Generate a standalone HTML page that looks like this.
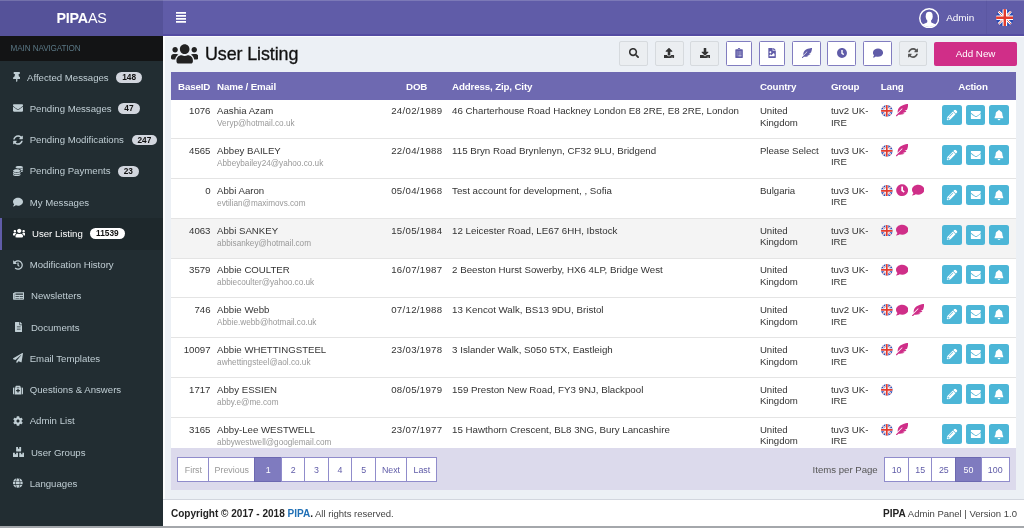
<!DOCTYPE html>
<html>
<head>
<meta charset="utf-8">
<title>PIPA Admin</title>
<style>
*{box-sizing:border-box;margin:0;padding:0}
html,body{width:1024px;height:528px;overflow:hidden;background:#ecf0f5}
body{font-family:"Liberation Sans",sans-serif;font-size:9.65px;color:#333;position:relative;-webkit-font-smoothing:antialiased;will-change:transform}
svg{display:block}
.abs{position:absolute}
/* header */
#logo{left:0;top:0;width:163px;height:35.7px;background:#555299;color:#fff;text-align:center;line-height:37.5px;font-size:14.3px;letter-spacing:-0.2px}
#logo b{font-weight:bold}
#nav{left:163px;top:0;width:861px;height:35.7px;background:#605ca8}
#burger{left:175.7px;top:12px;width:10.8px;height:10.8px;color:#fff}
#userimg{left:918.85px;top:7.85px}
#admin{left:946.2px;top:0.3px;line-height:35.7px;color:#fff;font-size:9.95px}
#flagsep{left:985.5px;top:0;width:1px;height:35.7px;background:#5b57a2}
#navb{left:163px;top:34.3px;width:861px;height:1.4px;background:#544ca2}
#wl1{left:163px;top:35.7px;width:861px;height:1.5px;background:#fbfcfd}
#wl2{left:163px;top:35.7px;width:1.6px;height:463.3px;background:#fbfcfd}
#topline{left:0;top:0;width:1024px;height:1px;background:rgba(255,255,255,0.18)}
/* sidebar */
#side{left:0;top:35.7px;width:163px;height:493px;background:#222d32}
#band{left:0;top:0;width:163px;height:25.8px;background:#131415;color:#5a7784;font-size:8.15px;line-height:25.8px;padding-left:10.6px;letter-spacing:-0.1px}
.mi{position:absolute;left:0;width:163px;height:31.25px;color:#c0ced4;line-height:31.25px;white-space:nowrap}
.mi .ic{position:absolute;top:0;left:0;color:#c0ced4;fill:currentColor}
.mi .tx{position:absolute;top:0}
.mi .bd{position:absolute;top:10.4px;height:10.9px;line-height:11.5px;background:#d2d6de;color:#111;border-radius:6px;font-weight:bold;font-size:8.3px;text-align:center}
.mi.act{height:31.8px;background:#1e282c;color:#fff;border-left:2.2px solid #605ca8}
.mi.act .ic{color:#fff}
.mi.act .bd{background:#fff}
/* content */
#title{-webkit-text-stroke:0.3px #111;left:205px;top:42.3px;font-size:17.9px;line-height:24px;color:#111;letter-spacing:-0.1px}
#titleic{left:171.1px;top:43px;color:#222}
.tb{position:absolute;top:41.2px;height:24.6px;border:1px solid #d6dade;background:#ebeef1;border-radius:2px;color:#333}
.tb.p{border-radius:1.5px;border-color:#817dc0;background:#fff;color:#605ca8}
.tb svg{position:absolute;left:50%;top:50%;transform:translate(-50%,-50%);fill:currentColor}
#addnew{left:934.3px;top:41.8px;width:82.5px;height:24px;background:#d02e88;color:#fff;border-radius:2px;text-align:center;line-height:24px;font-size:9.8px}
/* table */
#box{left:171.3px;top:72.2px;width:845.2px;height:418.3px;background:#fff;overflow:hidden}
#thead{z-index:2;left:0;top:0;width:845.2px;height:27.6px;background:#6e69b1;color:#fff;font-weight:bold;font-size:9.75px;line-height:27.3px}
#thead span{position:absolute;top:0.6px;white-space:nowrap;letter-spacing:-0.15px}
.row{position:absolute;left:0;width:845.2px;height:39.83px;border-top:1px solid #e4e4e4;background:#fff;line-height:12px;color:#333}
.row.alt{background:#f4f4f4}
.row span,.row div{position:absolute;white-space:nowrap}
.row .id{right:806px;top:5.95px;text-align:right}
.row .nm{left:45.8px;top:5.95px}
.row .em{left:45.8px;top:18.8px;font-size:8.2px;color:#999}
.row .dob{left:218.5px;top:5.95px;width:54px;text-align:center;letter-spacing:0.3px}
.row .ad{left:280.8px;top:5.95px;font-size:9.73px}
.row .co{left:588.6px;top:5.95px;white-space:normal;width:60px;line-height:11.4px}
.row .gr{left:659.6px;top:5.95px;white-space:normal;width:48px;line-height:11.4px}
.row .lg{left:709.5px;top:5.85px;height:11px;width:60px}
.row .ab{top:6.2px;width:19.5px;height:19.7px;background:#4cb6d7;border-radius:2.5px;color:#fff}
.row .ab svg{position:absolute;left:50%;top:50%;transform:translate(-50%,-50%);fill:#fff}
.lg svg{position:absolute;top:0}
svg.fl{position:absolute}
/* box footer */
#bfoot{left:0;top:375.8px;width:845.2px;height:42.5px;background:#dcdaec}
.pg{position:absolute;top:9.4px;height:25px;border:1px solid #908ccb;background:#fff;color:#605ca8;text-align:center;line-height:24.8px;font-size:8.85px;margin-left:-1px}
.pg.dis{color:#999}
.pg.on{background:#7f7bbf;color:#fff;border-color:#6c68b0}
#ipp{top:9.7px;left:641.3px;line-height:24.6px;color:#555;font-size:9.6px}
/* footer */
#foot{left:163px;top:498.8px;width:861px;height:28px;background:#fff;border-top:1px solid #d2d6de;color:#444;font-size:9.5px;line-height:28.6px}
#foot b{color:#222;font-size:10.02px}
#foot .l{position:absolute;left:8px;top:0}
#foot .r{position:absolute;right:7px;top:0}
#botline{left:0;top:526px;width:1024px;height:2px;background:#a4a7ab}
</style>
</head>
<body>

<div id="logo" class="abs"><b>PIPA</b>AS</div>
<div id="nav" class="abs"></div>
<svg id="burger" class="abs" viewBox="0 0 10.8 10.8"><path fill="#fff" d="M0 0h10.8v1.8H0zM0 3h10.8v1.8H0zM0 6h10.8v1.8H0zM0 9h10.8v1.800H0z"/></svg>
<svg id="userimg" class="abs" viewBox="0 0 20.4 20.4" width="20.4" height="20.4"><defs><clipPath id="uc"><circle cx="10.2" cy="10.2" r="8.9"/></clipPath></defs><g clip-path="url(#uc)" fill="#fff"><ellipse cx="10.2" cy="8.3" rx="3.5" ry="4.5"/><path d="M8.3 11.5h3.800v2.100c0 1 .8 1.500 2.400 2 2.300.8 3.400 1.700 3.900 3.500v2H2v-2c.5-1.800 1.600-2.700 3.900-3.500 1.600-.5 2.400-1 2.400-2z"/></g><circle cx="10.2" cy="10.2" r="9.45" fill="none" stroke="#fff" stroke-width="1.45"/></svg>
<div id="admin" class="abs">Admin</div>
<div id="flagsep" class="abs"></div><div id="topline" class="abs"></div><div id="navb" class="abs"></div><div id="wl1" class="abs"></div><div id="wl2" class="abs"></div>
<svg class="fl" viewBox="0 0 20 20" width="17.6" height="17.6" style="left:995.5px;top:8.8px"><defs><clipPath id="fc10"><circle cx="10" cy="10" r="10"/></clipPath></defs><g clip-path="url(#fc10)"><rect width="20" height="20" fill="#2a4cb4"/><path d="M0 0L20 20M20 0L0 20" stroke="#fff" stroke-width="2.8"/><path d="M0 0L20 20M20 0L0 20" stroke="#e23a2e" stroke-width="0.9"/><path d="M10 0V20M0 10H20" stroke="#fff" stroke-width="5.2"/><path d="M10 0V20M0 10H20" stroke="#e23a2e" stroke-width="2.8"/></g></svg>

<div id="side" class="abs">
<div id="band" class="abs">MAIN NAVIGATION</div>
<div class="mi" style="top:26.00px"><svg class="ic" viewBox="0 0 384 512" width="7.50" height="10.00" style="left:12.90px;top:10.5px"><path d="M298.028 214.267L285.793 96H328c13.255 0 24-10.745 24-24V24c0-13.255-10.745-24-24-24H56C42.745 0 32 10.745 32 24v48c0 13.255 10.745 24 24 24h42.207L85.972 214.267C37.465 236.820 0 277.261 0 328c0 13.255 10.745 24 24 24h136v104.007c0 1.242.289 2.467.845 3.578l24 48c2.941 5.882 11.364 5.893 14.311 0l24-48a8.008 8.008 0 0 0 .845-3.578V352h136c13.255 0 24-10.745 24-24 0-51.183-37.983-91.420-85.973-113.733z"/></svg><span class="tx" style="left:27.00px">Affected Messages</span><span class="bd" style="left:116.00px;width:26.20px">148</span></div>
<div class="mi" style="top:57.25px"><svg class="ic" viewBox="0 0 512 512" width="10.00" height="10.00" style="left:12.90px;top:10.5px"><path d="M502.300 190.800c3.900-3.100 9.700-.2 9.700 4.700V400c0 26.500-21.500 48-48 48H48c-26.500 0-48-21.500-48-48V195.600c0-5 5.700-7.800 9.700-4.700 22.400 17.400 52.100 39.500 154.100 113.600 21.100 15.400 56.700 47.800 92.200 47.600 35.700.3 72-32.800 92.300-47.600 102-74.100 131.600-96.300 154-113.700zM256 320c23.200.4 56.600-29.200 73.400-41.400 132.700-96.300 142.800-104.700 173.400-128.700 5.800-4.500 9.200-11.500 9.200-18.900v-19c0-26.500-21.500-48-48-48H48C21.500 64 0 85.500 0 112v19c0 7.400 3.400 14.300 9.200 18.900 30.600 23.900 40.700 32.400 173.400 128.700 16.800 12.200 50.200 41.800 73.400 41.400z"/></svg><span class="tx" style="left:29.70px">Pending Messages</span><span class="bd" style="left:118.20px;width:21.60px">47</span></div>
<div class="mi" style="top:88.50px"><svg class="ic" viewBox="0 0 512 512" width="10.00" height="10.00" style="left:12.90px;top:10.5px"><path d="M370.720 133.280C339.458 104.008 298.888 87.962 255.848 88c-77.458.068-144.328 53.178-162.791 126.850-1.344 5.363-6.122 9.150-11.651 9.150H24.103c-7.498 0-13.194-6.807-11.807-14.176C33.933 94.924 134.813 8 256 8c66.448 0 126.791 26.136 171.315 68.685L463.030 40.970C478.149 25.851 504 36.559 504 57.941V192c0 13.255-10.745 24-24 24H345.941c-21.382 0-32.090-25.851-16.971-40.971l41.750-41.749zM32 296h134.059c21.382 0 32.090 25.851 16.971 40.971l-41.750 41.750c31.262 29.273 71.835 45.319 114.876 45.280 77.418-.07 144.315-53.144 162.787-126.849 1.344-5.363 6.122-9.150 11.651-9.150h57.304c7.498 0 13.194 6.807 11.807 14.176C478.067 417.076 377.187 504 256 504c-66.448 0-126.791-26.136-171.315-68.685L48.970 471.030C33.851 486.149 8 475.441 8 454.059V320c0-13.255 10.745-24 24-24z"/></svg><span class="tx" style="left:29.70px">Pending Modifications</span><span class="bd" style="left:131.60px;width:25.60px">247</span></div>
<div class="mi" style="top:119.75px"><svg class="ic" viewBox="0 0 512 512" width="10.00" height="10.00" style="left:12.90px;top:10.5px"><path d="M0 405v43c0 35 86 64 192 64s192-29 192-64v-43c-41 29-117 43-192 43S41 434 0 405zM320 128c106 0 192-29 192-64S426 0 320 0 128 29 128 64s86 64 192 64zM0 300v52c0 35 86 64 192 64s192-29 192-64v-52c-41 34-117 52-192 52S41 334 0 300zm416 11c57-11 96-32 96-55v-43c-23 16-57 27-96 34v64zM192 160C86 160 0 196 0 240s86 80 192 80 192-36 192-80-86-80-192-80zm219 56c60-11 101-32 101-56v-43c-35 25-96 39-160 42 29 14 51 33 59 57z"/></svg><span class="tx" style="left:29.70px">Pending Payments</span><span class="bd" style="left:117.80px;width:21.00px">23</span></div>
<div class="mi" style="top:151.00px"><svg class="ic" viewBox="0 0 512 512" width="10.00" height="10.00" style="left:12.90px;top:10.5px"><path d="M256 32C114.600 32 0 125.100 0 240c0 49.600 21.400 95 57 130.700C44.500 421.100 2.700 466 2.200 466.500c-2.200 2.300-2.800 5.700-1.500 8.700S4.800 480 8 480c66.300 0 116-31.800 140.600-51.400 32.700 12.300 69 19.400 107.400 19.400 141.400 0 256-93.100 256-208S397.400 32 256 32z"/></svg><span class="tx" style="left:29.70px">My Messages</span></div>
<div class="mi act" style="top:182.25px"><svg class="ic" viewBox="0 0 640 512" width="12.50" height="10.00" style="left:10.70px;top:10.5px"><path d="M96 224c35.300 0 64-28.700 64-64s-28.700-64-64-64-64 28.700-64 64 28.700 64 64 64zm448 0c35.300 0 64-28.700 64-64s-28.700-64-64-64-64 28.700-64 64 28.700 64 64 64zm32 32h-64c-17.600 0-33.500 7.100-45.100 18.600 40.300 22.100 68.900 62 75.100 109.400h66c17.700 0 32-14.300 32-32v-32c0-35.300-28.700-64-64-64zm-256 0c61.900 0 112-50.100 112-112S381.900 32 320 32 208 82.100 208 144s50.100 112 112 112zm76.800 32h-8.300c-20.800 10-43.900 16-68.500 16s-47.600-6-68.500-16h-8.300C179.600 288 128 339.600 128 403.200V432c0 26.500 21.500 48 48 48h288c26.500 0 48-21.500 48-48v-28.800c0-63.600-51.600-115.200-115.200-115.200zm-223.700-13.400C161.500 263.100 145.600 256 128 256H64c-35.300 0-64 28.700-64 64v32c0 17.700 14.300 32 32 32h65.900c6.300-47.400 34.900-87.300 75.200-109.400z"/></svg><span class="tx" style="left:30.00px">User Listing</span><span class="bd" style="left:87.60px;width:35.60px">11539</span></div>
<div class="mi" style="top:213.50px"><svg class="ic" viewBox="0 0 512 512" width="10.00" height="10.00" style="left:12.90px;top:10.5px"><path d="M504 255.531c.253 136.640-111.180 248.372-247.820 248.468-59.015.042-113.223-20.530-155.822-54.911-11.077-8.940-11.905-25.541-1.839-35.607l11.267-11.267c8.609-8.609 22.353-9.551 31.891-1.984C173.062 425.135 212.781 440 256 440c101.705 0 184-82.311 184-184 0-101.705-82.311-184-184-184-48.814 0-93.149 18.969-126.068 49.932l50.754 50.754c10.080 10.080 2.941 27.314-11.313 27.314H24c-8.837 0-16-7.163-16-16V38.627c0-14.254 17.234-21.393 27.314-11.314l49.372 49.372C129.209 34.136 189.552 8 256 8c136.810 0 247.747 110.780 248 247.531zm-180.912 78.784l9.823-12.630c8.138-10.463 6.253-25.542-4.210-33.679L288 256.349V152c0-13.255-10.745-24-24-24h-16c-13.255 0-24 10.745-24 24v135.651l65.409 50.874c10.463 8.137 25.541 6.253 33.679-4.210z"/></svg><span class="tx" style="left:29.70px">Modification History</span></div>
<div class="mi" style="top:244.75px"><svg class="ic" viewBox="0 0 576 512" width="11.25" height="10.00" style="left:12.70px;top:10.5px"><path d="M552 64H88c-13 0-24 11-24 24v8H24c-13 0-24 11-24 24v272c0 31 25 56 56 56h464c31 0 56-25 56-56V88c0-13-11-24-24-24zM56 400c-4 0-8-4-8-8V144h16v248c0 4-4 8-8 8zm236-16H140c-7 0-12-5-12-12v-8c0-7 5-12 12-12h152c7 0 12 5 12 12v8c0 7-5 12-12 12zm208 0H348c-7 0-12-5-12-12v-8c0-7 5-12 12-12h152c7 0 12 5 12 12v8c0 7-5 12-12 12zm-208-96H140c-7 0-12-5-12-12v-8c0-7 5-12 12-12h152c7 0 12 5 12 12v8c0 7-5 12-12 12zm208 0H348c-7 0-12-5-12-12v-8c0-7 5-12 12-12h152c7 0 12 5 12 12v8c0 7-5 12-12 12zm0-96H140c-7 0-12-5-12-12v-40c0-7 5-12 12-12h360c7 0 12 5 12 12v40c0 7-5 12-12 12z"/></svg><span class="tx" style="left:31.00px">Newsletters</span></div>
<div class="mi" style="top:276.00px"><svg class="ic" viewBox="0 0 384 512" width="7.50" height="10.00" style="left:14.80px;top:10.5px"><path d="M224 136V0H24C10.700 0 0 10.700 0 24v464c0 13.300 10.700 24 24 24h336c13.300 0 24-10.700 24-24V160H248c-13.200 0-24-10.800-24-24zm64 236c0 6.600-5.400 12-12 12H108c-6.600 0-12-5.400-12-12v-8c0-6.600 5.400-12 12-12h168c6.600 0 12 5.400 12 12v8zm0-64c0 6.600-5.400 12-12 12H108c-6.600 0-12-5.400-12-12v-8c0-6.600 5.400-12 12-12h168c6.600 0 12 5.400 12 12v8zm0-72v8c0 6.600-5.400 12-12 12H108c-6.600 0-12-5.400-12-12v-8c0-6.600 5.400-12 12-12h168c6.600 0 12 5.400 12 12zm96-114.100v6.100H256V0h6.100c6.400 0 12.500 2.500 17 7l97.900 98c4.500 4.500 7 10.600 7 16.900z"/></svg><span class="tx" style="left:30.90px">Documents</span></div>
<div class="mi" style="top:307.25px"><svg class="ic" viewBox="0 0 512 512" width="10.00" height="10.00" style="left:12.90px;top:10.5px"><path d="M476 3.200L12.500 270.600c-18.100 10.400-15.800 35.600 2.200 43.200L121 358.400l287.300-253.200c5.500-4.900 13.300 2.600 8.600 8.300L176 407v80.500c0 23.600 28.500 32.900 42.500 15.800L282 426l124.600 52.200c14.200 6 30.400-2.900 33-18.200l72-432C515 7.800 493.300-6.800 476 3.200z"/></svg><span class="tx" style="left:29.70px">Email Templates</span></div>
<div class="mi" style="top:338.50px"><svg class="ic" viewBox="0 0 512 512" width="10.00" height="10.00" style="left:12.70px;top:10.5px"><path d="M96 480h320V128h-32V80c0-26-22-48-48-48H176c-26 0-48 22-48 48v48H96v352zm96-384h128v32H192V96zm320 80v256c0 26-22 48-48 48h-16V128h16c26 0 48 22 48 48zM64 480H48c-26 0-48-22-48-48V176c0-26 22-48 48-48h16v352zm288-208v32c0 9-7 16-16 16h-48v48c0 9-7 16-16 16h-32c-9 0-16-7-16-16v-48h-48c-9 0-16-7-16-16v-32c0-9 7-16 16-16h48v-48c0-9 7-16 16-16h32c9 0 16 7 16 16v48h48c9 0 16 7 16 16z"/></svg><span class="tx" style="left:29.70px">Questions &amp; Answers</span></div>
<div class="mi" style="top:369.75px"><svg class="ic" viewBox="0 0 512 512" width="10.00" height="10.00" style="left:12.90px;top:10.5px"><path d="M487.400 315.700l-42.600-24.600c4.300-23.200 4.300-47 0-70.200l42.600-24.600c4.900-2.800 7.100-8.600 5.500-14-11.100-35.600-30-67.800-54.700-94.600-3.800-4.100-10-5.100-14.800-2.300L380.800 110c-17.900-15.400-38.500-27.300-60.800-35.100V25.800c0-5.600-3.900-10.500-9.400-11.700-36.700-8.200-74.300-7.800-109.200 0-5.500 1.200-9.400 6.100-9.400 11.700V75c-22.200 7.900-42.800 19.800-60.800 35.100L88.700 85.500c-4.900-2.800-11-1.900-14.800 2.300-24.700 26.700-43.600 58.900-54.700 94.600-1.700 5.400.6 11.200 5.500 14L67.300 221c-4.300 23.200-4.300 47 0 70.200l-42.600 24.600c-4.900 2.800-7.100 8.600-5.500 14 11.100 35.600 30 67.800 54.700 94.600 3.800 4.100 10 5.100 14.800 2.300l42.600-24.600c17.900 15.400 38.500 27.300 60.800 35.100v49.200c0 5.600 3.900 10.500 9.400 11.700 36.700 8.200 74.300 7.800 109.200 0 5.500-1.200 9.400-6.100 9.400-11.700v-49.200c22.200-7.900 42.800-19.800 60.800-35.100l42.600 24.600c4.900 2.800 11 1.900 14.800-2.300 24.700-26.700 43.600-58.900 54.700-94.600 1.500-5.500-.7-11.300-5.600-14.100zM256 336c-44.100 0-80-35.900-80-80s35.900-80 80-80 80 35.900 80 80-35.900 80-80 80z"/></svg><span class="tx" style="left:29.70px">Admin List</span></div>
<div class="mi" style="top:401.00px"><svg class="ic" viewBox="0 0 576 512" width="11.25" height="10.00" style="left:12.60px;top:10.5px"><path d="M560 288h-80v96l-32-21-32 21v-96h-80c-9 0-16 7-16 16v192c0 9 7 16 16 16h224c9 0 16-7 16-16V304c0-9-7-16-16-16zm-384-64h224c9 0 16-7 16-16V16c0-9-7-16-16-16h-80v96l-32-21-32 21V0h-80c-9 0-16 7-16 16v192c0 9 7 16 16 16zm64 64h-80v96l-32-21-32 21v-96H16c-9 0-16 7-16 16v192c0 9 7 16 16 16h224c9 0 16-7 16-16V304c0-9-7-16-16-16z"/></svg><span class="tx" style="left:30.90px">User Groups</span></div>
<div class="mi" style="top:432.25px"><svg class="ic" viewBox="0 0 496 512" width="9.69" height="10.00" style="left:13.00px;top:10.5px"><path d="M336.500 160C322 70.700 287.800 8 248 8s-74 62.700-88.500 152h177zM152 256c0 22.200 1.200 43.500 3.300 64h185.300c2.100-20.500 3.300-41.800 3.300-64s-1.200-43.500-3.300-64H155.300c-2.100 20.500-3.300 41.800-3.300 64zm324.700-96c-28.600-67.900-86.500-120.400-158-141.600 24.400 33.800 41.200 84.700 50 141.600h108zM177.200 18.400C105.800 39.600 47.800 92.100 19.300 160h108c8.700-56.900 25.500-107.800 49.900-141.600zM487.400 192H372.700c2.100 21 3.300 42.500 3.300 64s-1.200 43-3.300 64h114.600c5.500-20.500 8.600-41.800 8.600-64s-3.100-43.500-8.500-64zM120 256c0-21.500 1.200-43 3.300-64H8.600C3.200 212.500 0 233.800 0 256s3.200 43.500 8.600 64h114.600c-2-21-3.200-42.500-3.200-64zm39.500 96c14.500 89.300 48.700 152 88.500 152s74-62.700 88.500-152h-177zm159.300 141.600c71.400-21.200 129.400-73.700 158-141.600h-108c-8.800 56.900-25.600 107.800-50 141.600zM19.300 352c28.600 67.900 86.500 120.400 158 141.600-24.400-33.800-41.200-84.700-50-141.600h-108z"/></svg><span class="tx" style="left:29.70px">Languages</span></div>
</div>

<div id="titleic" class="abs"><svg viewBox="0 0 640 512" width="27.38" height="21.90" style="fill:#222"><path d="M96 224c35.300 0 64-28.700 64-64s-28.700-64-64-64-64 28.700-64 64 28.700 64 64 64zm448 0c35.300 0 64-28.700 64-64s-28.700-64-64-64-64 28.700-64 64 28.700 64 64 64zm32 32h-64c-17.600 0-33.500 7.100-45.100 18.600 40.300 22.100 68.900 62 75.100 109.400h66c17.700 0 32-14.300 32-32v-32c0-35.300-28.700-64-64-64zm-256 0c61.900 0 112-50.100 112-112S381.900 32 320 32 208 82.100 208 144s50.100 112 112 112zm76.800 32h-8.300c-20.800 10-43.900 16-68.500 16s-47.600-6-68.500-16h-8.300C179.600 288 128 339.600 128 403.200V432c0 26.500 21.500 48 48 48h288c26.500 0 48-21.500 48-48v-28.800c0-63.600-51.600-115.200-115.200-115.200zm-223.700-13.400C161.500 263.100 145.600 256 128 256H64c-35.300 0-64 28.700-64 64v32c0 17.700 14.300 32 32 32h65.900c6.300-47.400 34.900-87.300 75.200-109.400z"/></svg></div>
<div id="title" class="abs">User Listing</div>
<div class="tb" style="left:619.20px;width:28.70px"><svg viewBox="0 0 512 512" width="10.20" height="10.20" style=""><path d="M505 442.700L405.300 343c-4.500-4.500-10.600-7-17-7H372c27.600-35.300 44-79.700 44-128C416 93.100 322.900 0 208 0S0 93.100 0 208s93.100 208 208 208c48.300 0 92.700-16.400 128-44v16.300c0 6.400 2.500 12.500 7 17l99.700 99.700c9.400 9.400 24.600 9.400 33.900 0l28.300-28.300c9.400-9.400 9.400-24.600.1-34zM208 336c-70.700 0-128-57.200-128-128 0-70.700 57.200-128 128-128 70.700 0 128 57.200 128 128 0 70.700-57.200 128-128 128z"/></svg></div>
<div class="tb" style="left:655.00px;width:28.90px"><svg viewBox="0 0 512 512" width="10.20" height="10.20" style=""><path d="M296 384h-80c-13.300 0-24-10.700-24-24V192h-87.700c-17.800 0-26.700-21.500-14.100-34.100L242.300 5.700c7.500-7.500 19.800-7.500 27.300 0l152.200 152.200c12.600 12.600 3.700 34.100-14.100 34.100H320v168c0 13.300-10.700 24-24 24zm216-8v112c0 13.300-10.700 24-24 24H24c-13.300 0-24-10.700-24-24V376c0-13.300 10.700-24 24-24h136v8c0 30.900 25.100 56 56 56h80c30.900 0 56-25.100 56-56v-8h136c13.300 0 24 10.700 24 24zm-124 88c0-11-9-20-20-20s-20 9-20 20 9 20 20 20 20-9 20-20zm64 0c0-11-9-20-20-20s-20 9-20 20 9 20 20 20 20-9 20-20z"/></svg></div>
<div class="tb" style="left:690.20px;width:28.80px"><svg viewBox="0 0 512 512" width="10.20" height="10.20" style=""><path d="M216 0h80c13.300 0 24 10.700 24 24v168h87.700c17.800 0 26.700 21.500 14.100 34.100L269.700 378.300c-7.500 7.500-19.800 7.500-27.300 0L90.100 226.100c-12.600-12.600-3.700-34.100 14.100-34.100H192V24c0-13.300 10.700-24 24-24zm296 376v112c0 13.300-10.700 24-24 24H24c-13.300 0-24-10.700-24-24V376c0-13.300 10.700-24 24-24h146.700l49 49c20.100 20.100 52.500 20.100 72.600 0l49-49H488c13.300 0 24 10.700 24 24zm-124 88c0-11-9-20-20-20s-20 9-20 20 9 20 20 20 20-9 20-20zm64 0c0-11-9-20-20-20s-20 9-20 20 9 20 20 20 20-9 20-20z"/></svg></div>
<div class="tb p" style="left:725.75px;width:26.50px"><svg viewBox="0 0 384 512" width="7.65" height="10.20" style=""><path d="M336 64h-80c0-35.300-28.700-64-64-64s-64 28.700-64 64H48C21.500 64 0 85.500 0 112v352c0 26.500 21.500 48 48 48h288c26.500 0 48-21.500 48-48V112c0-26.500-21.500-48-48-48zM96 424c-13.300 0-24-10.700-24-24s10.700-24 24-24 24 10.700 24 24-10.700 24-24 24zm0-96c-13.300 0-24-10.700-24-24s10.700-24 24-24 24 10.700 24 24-10.700 24-24 24zm0-96c-13.300 0-24-10.700-24-24s10.700-24 24-24 24 10.700 24 24-10.700 24-24 24zm96-192c13.300 0 24 10.700 24 24s-10.700 24-24 24-24-10.700-24-24 10.700-24 24-24zm128 368c0 4.400-3.600 8-8 8H168c-4.400 0-8-3.600-8-8v-16c0-4.400 3.600-8 8-8h144c4.400 0 8 3.600 8 8v16zm0-96c0 4.400-3.600 8-8 8H168c-4.400 0-8-3.600-8-8v-16c0-4.400 3.600-8 8-8h144c4.400 0 8 3.600 8 8v16zm0-96c0 4.400-3.600 8-8 8H168c-4.400 0-8-3.600-8-8v-16c0-4.400 3.600-8 8-8h144c4.400 0 8 3.600 8 8v16z"/></svg></div>
<div class="tb p" style="left:759.00px;width:26.00px"><svg viewBox="0 0 384 512" width="7.65" height="10.20" style=""><path d="M384 121.900v6.100H256V0h6.100c6.400 0 12.500 2.500 17 7l97.900 98c4.500 4.500 7 10.600 7 16.900zM248 160c-13.200 0-24-10.800-24-24V0H24C10.700 0 0 10.700 0 24v464c0 13.300 10.700 24 24 24h336c13.300 0 24-10.700 24-24V160H248zM112 168c26.500 0 48 21.500 48 48s-21.500 48-48 48-48-21.500-48-48 21.500-48 48-48zM320 416H64l.5-48.500 39.500-39.500c4.700-4.700 11.800-4.200 16.500.5L160 368 263.500 264.500c4.700-4.700 12.300-4.700 17 0L320 304v112z"/></svg></div>
<div class="tb p" style="left:792.25px;width:28.50px"><svg viewBox="0 0 512 512" width="10.20" height="10.20" style=""><path d="M512 0C460.220 3.560 96.440 38.200 71.010 287.610c-3.090 26.660-4.840 53.440-5.990 80.240l178.870-178.690c6.250-6.250 16.400-6.250 22.650 0s6.250 16.380 0 22.630L7.040 471.030c-9.380 9.370-9.380 24.570 0 33.940 9.380 9.370 24.590 9.370 33.980 0l57.130-57.070c42.090-.14 84.150-2.530 125.960-7.360 53.480-5.440 97.020-26.470 132.580-56.540H255.740l146.790-48.880c11.250-14.890 21.370-30.710 30.450-47.120h-81.140l106.540-53.210C500.290 132.860 510.190 26.260 512 0z"/></svg></div>
<div class="tb p" style="left:827.30px;width:29.10px"><svg viewBox="0 0 512 512" width="10.20" height="10.20" style=""><path d="M256 8C119 8 8 119 8 256s111 248 248 248 248-111 248-248S393 8 256 8zm57.100 350.100L224.900 294c-3.100-2.300-4.900-5.900-4.900-9.700V116c0-6.600 5.400-12 12-12h48c6.600 0 12 5.400 12 12v137.700l63.500 46.200c5.400 3.900 6.500 11.400 2.600 16.800l-28.200 38.800c-3.900 5.300-11.400 6.500-16.800 2.600z"/></svg></div>
<div class="tb p" style="left:863.20px;width:28.70px"><svg viewBox="0 0 512 512" width="10.20" height="10.20" style=""><path d="M256 32C114.600 32 0 125.100 0 240c0 49.600 21.400 95 57 130.700C44.500 421.100 2.700 466 2.200 466.500c-2.200 2.300-2.800 5.700-1.500 8.700S4.800 480 8 480c66.300 0 116-31.800 140.600-51.400 32.700 12.300 69 19.400 107.400 19.400 141.400 0 256-93.100 256-208S397.400 32 256 32z"/></svg></div>
<div class="tb" style="left:898.70px;width:28.80px;color:#555"><svg viewBox="0 0 512 512" width="10.20" height="10.20" style=""><path d="M370.720 133.280C339.458 104.008 298.888 87.962 255.848 88c-77.458.068-144.328 53.178-162.791 126.850-1.344 5.363-6.122 9.150-11.651 9.150H24.103c-7.498 0-13.194-6.807-11.807-14.176C33.933 94.924 134.813 8 256 8c66.448 0 126.791 26.136 171.315 68.685L463.030 40.970C478.149 25.851 504 36.559 504 57.941V192c0 13.255-10.745 24-24 24H345.941c-21.382 0-32.090-25.851-16.971-40.971l41.750-41.749zM32 296h134.059c21.382 0 32.090 25.851 16.971 40.971l-41.750 41.750c31.262 29.273 71.835 45.319 114.876 45.280 77.418-.07 144.315-53.144 162.787-126.849 1.344-5.363 6.122-9.150 11.651-9.150h57.304c7.498 0 13.194 6.807 11.807 14.176C478.067 417.076 377.187 504 256 504c-66.448 0-126.791-26.136-171.315-68.685L48.970 471.030C33.851 486.149 8 475.441 8 454.059V320c0-13.255 10.745-24 24-24z"/></svg></div>
<div id="addnew" class="abs">Add New</div>

<div id="box" class="abs">
<div id="thead" class="abs">
<span style="left:6.700px">BaseID</span><span style="left:45.800px">Name / Email</span><span style="left:234.7px">DOB</span><span style="left:280.800px">Address, Zip, City</span><span style="left:588.600px">Country</span><span style="left:659.600px">Group</span><span style="left:709.5px">Lang</span><span style="left:787px">Action</span>
</div>
<div class="row" style="top:26.00px"><span class="id">1076</span><span class="nm">Aashia Azam</span><span class="em">Veryp@hotmail.co.uk</span><span class="dob">24/02/1989</span><span class="ad">46 Charterhouse Road Hackney London E8 2RE, E8 2RE, London</span><div class="co">United Kingdom</div><div class="gr">tuv2 UK- IRE</div><div class="lg"><svg class="fl" viewBox="0 0 20 20" width="11.7" height="11.7" style="left:0.2px;top:0.1px"><defs><clipPath id="fc1"><circle cx="10" cy="10" r="10"/></clipPath></defs><g clip-path="url(#fc1)"><rect width="20" height="20" fill="#2a4cb4"/><path d="M0 0L20 20M20 0L0 20" stroke="#fff" stroke-width="2.8"/><path d="M0 0L20 20M20 0L0 20" stroke="#e23a2e" stroke-width="0.9"/><path d="M10 0V20M0 10H20" stroke="#fff" stroke-width="5.2"/><path d="M10 0V20M0 10H20" stroke="#e23a2e" stroke-width="2.8"/></g></svg><svg viewBox="0 0 512 512" width="12.30" height="12.30" style="left:15.3px;top:-0.6px;fill:#cf2e88"><path d="M512 0C460.220 3.560 96.440 38.200 71.010 287.610c-3.090 26.660-4.840 53.440-5.990 80.240l178.870-178.690c6.250-6.250 16.400-6.250 22.650 0s6.250 16.380 0 22.630L7.040 471.030c-9.380 9.370-9.380 24.570 0 33.940 9.380 9.370 24.590 9.370 33.980 0l57.130-57.070c42.090-.14 84.150-2.530 125.960-7.360 53.480-5.440 97.020-26.470 132.580-56.540H255.740l146.790-48.880c11.250-14.890 21.370-30.710 30.450-47.120h-81.140l106.540-53.210C500.290 132.860 510.190 26.260 512 0z"/></svg></div><div class="ab" style="left:771.10px"><svg viewBox="0 0 512 512" width="10.70" height="10.70" style=""><path d="M497.900 142.100l-46.100 46.100c-4.700 4.700-12.300 4.700-17 0l-111-111c-4.700-4.700-4.700-12.300 0-17l46.100-46.100c18.700-18.700 49.100-18.700 67.900 0l60.100 60.100c18.800 18.700 18.800 49.100 0 67.900zM284.200 99.800L21.600 362.400.4 483.900c-2.900 16.400 11.400 30.600 27.800 27.800l121.500-21.300 262.600-262.600c4.700-4.700 4.700-12.300 0-17l-111-111c-4.800-4.700-12.400-4.700-17.100 0zM124.100 339.900c-5.500-5.500-5.500-14.300 0-19.800l154-154c5.500-5.500 14.300-5.500 19.800 0s5.500 14.300 0 19.800l-154 154c-5.500 5.500-14.300 5.500-19.800 0zM88 424h48v36.300l-64.500 11.300-31.100-31.100L51.700 376H88v48z"/></svg></div><div class="ab" style="left:794.55px"><svg viewBox="0 0 512 512" width="10.70" height="10.70" style=""><path d="M502.300 190.800c3.900-3.100 9.700-.2 9.700 4.700V400c0 26.500-21.500 48-48 48H48c-26.500 0-48-21.500-48-48V195.600c0-5 5.700-7.800 9.700-4.700 22.400 17.400 52.100 39.500 154.100 113.600 21.100 15.400 56.700 47.800 92.200 47.600 35.700.3 72-32.800 92.300-47.600 102-74.100 131.600-96.300 154-113.700zM256 320c23.200.4 56.600-29.200 73.400-41.400 132.700-96.300 142.800-104.700 173.400-128.700 5.800-4.500 9.200-11.500 9.200-18.900v-19c0-26.500-21.500-48-48-48H48C21.500 64 0 85.500 0 112v19c0 7.400 3.400 14.300 9.200 18.900 30.600 23.900 40.700 32.400 173.400 128.700 16.800 12.200 50.200 41.800 73.400 41.400z"/></svg></div><div class="ab" style="left:818.00px"><svg viewBox="0 0 448 512" width="9.36" height="10.70" style=""><path d="M224 512c35.320 0 63.970-28.650 63.970-64H160.030c0 35.350 28.650 64 63.970 64zm215.390-149.710c-19.320-20.760-55.470-51.990-55.470-154.290 0-77.700-54.480-139.900-127.940-155.160V32c0-17.670-14.320-32-31.980-32s-31.980 14.330-31.980 32v20.840C118.560 68.100 64.080 130.300 64.080 208c0 102.300-36.150 133.530-55.470 154.290-6 6.450-8.660 14.160-8.610 21.710.11 16.400 12.980 32 32.100 32h383.800c19.120 0 32-15.600 32.100-32 .05-7.550-2.610-15.270-8.610-21.710z"/></svg></div></div>
<div class="row" style="top:65.84px"><span class="id">4565</span><span class="nm">Abbey BAILEY</span><span class="em">Abbeybailey24@yahoo.co.uk</span><span class="dob">22/04/1988</span><span class="ad">115 Bryn Road Brynlenyn, CF32 9LU, Bridgend</span><div class="co">Please Select</div><div class="gr">tuv3 UK- IRE</div><div class="lg"><svg class="fl" viewBox="0 0 20 20" width="11.7" height="11.7" style="left:0.2px;top:0.1px"><defs><clipPath id="fc2"><circle cx="10" cy="10" r="10"/></clipPath></defs><g clip-path="url(#fc2)"><rect width="20" height="20" fill="#2a4cb4"/><path d="M0 0L20 20M20 0L0 20" stroke="#fff" stroke-width="2.8"/><path d="M0 0L20 20M20 0L0 20" stroke="#e23a2e" stroke-width="0.9"/><path d="M10 0V20M0 10H20" stroke="#fff" stroke-width="5.2"/><path d="M10 0V20M0 10H20" stroke="#e23a2e" stroke-width="2.8"/></g></svg><svg viewBox="0 0 512 512" width="12.30" height="12.30" style="left:15.3px;top:-0.6px;fill:#cf2e88"><path d="M512 0C460.220 3.560 96.440 38.200 71.010 287.610c-3.090 26.660-4.840 53.440-5.990 80.240l178.870-178.690c6.250-6.250 16.400-6.250 22.650 0s6.250 16.380 0 22.630L7.040 471.030c-9.380 9.370-9.380 24.570 0 33.940 9.380 9.370 24.590 9.370 33.980 0l57.130-57.070c42.090-.14 84.150-2.530 125.960-7.360 53.480-5.440 97.020-26.470 132.580-56.540H255.740l146.790-48.880c11.250-14.890 21.370-30.710 30.450-47.120h-81.140l106.540-53.210C500.290 132.860 510.190 26.260 512 0z"/></svg></div><div class="ab" style="left:771.10px"><svg viewBox="0 0 512 512" width="10.70" height="10.70" style=""><path d="M497.900 142.100l-46.100 46.100c-4.700 4.700-12.300 4.700-17 0l-111-111c-4.700-4.700-4.700-12.300 0-17l46.100-46.100c18.700-18.700 49.100-18.700 67.900 0l60.100 60.100c18.800 18.700 18.800 49.100 0 67.900zM284.200 99.800L21.600 362.400.4 483.900c-2.900 16.400 11.400 30.600 27.800 27.800l121.500-21.300 262.600-262.600c4.700-4.700 4.700-12.300 0-17l-111-111c-4.800-4.700-12.400-4.700-17.100 0zM124.100 339.900c-5.500-5.500-5.500-14.300 0-19.800l154-154c5.500-5.500 14.300-5.500 19.800 0s5.500 14.300 0 19.800l-154 154c-5.500 5.500-14.300 5.500-19.800 0zM88 424h48v36.300l-64.500 11.300-31.100-31.100L51.700 376H88v48z"/></svg></div><div class="ab" style="left:794.55px"><svg viewBox="0 0 512 512" width="10.70" height="10.70" style=""><path d="M502.300 190.800c3.900-3.100 9.700-.2 9.700 4.700V400c0 26.500-21.500 48-48 48H48c-26.500 0-48-21.500-48-48V195.600c0-5 5.700-7.800 9.700-4.700 22.400 17.400 52.100 39.500 154.100 113.600 21.100 15.400 56.700 47.800 92.200 47.600 35.700.3 72-32.800 92.300-47.600 102-74.100 131.600-96.300 154-113.700zM256 320c23.200.4 56.600-29.200 73.400-41.400 132.700-96.300 142.800-104.700 173.400-128.700 5.800-4.500 9.200-11.500 9.200-18.900v-19c0-26.500-21.500-48-48-48H48C21.500 64 0 85.500 0 112v19c0 7.400 3.400 14.300 9.200 18.900 30.600 23.900 40.700 32.400 173.400 128.700 16.800 12.200 50.200 41.800 73.400 41.400z"/></svg></div><div class="ab" style="left:818.00px"><svg viewBox="0 0 448 512" width="9.36" height="10.70" style=""><path d="M224 512c35.320 0 63.970-28.650 63.970-64H160.030c0 35.350 28.650 64 63.970 64zm215.390-149.710c-19.320-20.760-55.470-51.990-55.470-154.290 0-77.700-54.480-139.900-127.940-155.160V32c0-17.670-14.320-32-31.980-32s-31.980 14.330-31.980 32v20.840C118.560 68.100 64.080 130.300 64.080 208c0 102.300-36.150 133.530-55.470 154.290-6 6.450-8.660 14.160-8.610 21.710.11 16.400 12.980 32 32.100 32h383.800c19.120 0 32-15.600 32.100-32 .05-7.550-2.610-15.270-8.610-21.710z"/></svg></div></div>
<div class="row" style="top:105.68px"><span class="id">0</span><span class="nm">Abbi Aaron</span><span class="em">evtilian@maximovs.com</span><span class="dob">05/04/1968</span><span class="ad">Test account for development, , Sofia</span><div class="co">Bulgaria</div><div class="gr">tuv3 UK- IRE</div><div class="lg"><svg class="fl" viewBox="0 0 20 20" width="11.7" height="11.7" style="left:0.2px;top:0.1px"><defs><clipPath id="fc3"><circle cx="10" cy="10" r="10"/></clipPath></defs><g clip-path="url(#fc3)"><rect width="20" height="20" fill="#2a4cb4"/><path d="M0 0L20 20M20 0L0 20" stroke="#fff" stroke-width="2.8"/><path d="M0 0L20 20M20 0L0 20" stroke="#e23a2e" stroke-width="0.9"/><path d="M10 0V20M0 10H20" stroke="#fff" stroke-width="5.2"/><path d="M10 0V20M0 10H20" stroke="#e23a2e" stroke-width="2.8"/></g></svg><svg viewBox="0 0 512 512" width="12.30" height="12.30" style="left:15.1px;top:-0.4px;fill:#cf2e88"><path d="M256 8C119 8 8 119 8 256s111 248 248 248 248-111 248-248S393 8 256 8zm57.100 350.100L224.900 294c-3.100-2.300-4.900-5.900-4.900-9.700V116c0-6.600 5.400-12 12-12h48c6.600 0 12 5.400 12 12v137.700l63.500 46.200c5.400 3.900 6.500 11.400 2.600 16.800l-28.200 38.800c-3.900 5.300-11.400 6.500-16.800 2.600z"/></svg><svg viewBox="0 0 512 512" width="12.40" height="12.40" style="left:30.8px;top:-0.6px;fill:#cf2e88"><path d="M256 32C114.600 32 0 125.100 0 240c0 49.600 21.400 95 57 130.700C44.500 421.100 2.700 466 2.200 466.500c-2.200 2.300-2.800 5.700-1.500 8.700S4.800 480 8 480c66.300 0 116-31.800 140.600-51.400 32.700 12.300 69 19.400 107.400 19.400 141.400 0 256-93.100 256-208S397.400 32 256 32z"/></svg></div><div class="ab" style="left:771.10px"><svg viewBox="0 0 512 512" width="10.70" height="10.70" style=""><path d="M497.900 142.100l-46.100 46.100c-4.700 4.700-12.300 4.700-17 0l-111-111c-4.700-4.700-4.700-12.300 0-17l46.100-46.100c18.700-18.700 49.100-18.700 67.900 0l60.100 60.100c18.800 18.700 18.800 49.100 0 67.900zM284.200 99.800L21.600 362.400.4 483.900c-2.900 16.400 11.400 30.600 27.800 27.800l121.500-21.300 262.600-262.600c4.700-4.700 4.700-12.300 0-17l-111-111c-4.800-4.700-12.400-4.700-17.100 0zM124.100 339.900c-5.500-5.500-5.500-14.300 0-19.800l154-154c5.500-5.500 14.300-5.500 19.800 0s5.500 14.300 0 19.800l-154 154c-5.500 5.500-14.300 5.500-19.800 0zM88 424h48v36.300l-64.500 11.300-31.100-31.100L51.700 376H88v48z"/></svg></div><div class="ab" style="left:794.55px"><svg viewBox="0 0 512 512" width="10.70" height="10.70" style=""><path d="M502.300 190.800c3.900-3.100 9.700-.2 9.700 4.700V400c0 26.500-21.500 48-48 48H48c-26.500 0-48-21.500-48-48V195.600c0-5 5.700-7.800 9.700-4.700 22.400 17.400 52.100 39.500 154.100 113.600 21.100 15.400 56.700 47.800 92.200 47.600 35.700.3 72-32.800 92.300-47.600 102-74.100 131.600-96.300 154-113.700zM256 320c23.200.4 56.600-29.200 73.400-41.400 132.700-96.300 142.800-104.700 173.400-128.700 5.800-4.500 9.200-11.500 9.200-18.900v-19c0-26.500-21.500-48-48-48H48C21.500 64 0 85.500 0 112v19c0 7.400 3.400 14.300 9.200 18.900 30.600 23.900 40.700 32.400 173.400 128.700 16.800 12.200 50.200 41.800 73.400 41.400z"/></svg></div><div class="ab" style="left:818.00px"><svg viewBox="0 0 448 512" width="9.36" height="10.70" style=""><path d="M224 512c35.320 0 63.970-28.650 63.970-64H160.030c0 35.350 28.650 64 63.970 64zm215.390-149.710c-19.320-20.760-55.470-51.990-55.470-154.290 0-77.700-54.480-139.900-127.940-155.160V32c0-17.670-14.320-32-31.980-32s-31.980 14.330-31.980 32v20.840C118.560 68.100 64.080 130.300 64.080 208c0 102.300-36.150 133.530-55.470 154.290-6 6.450-8.660 14.160-8.610 21.710.11 16.400 12.980 32 32.100 32h383.800c19.120 0 32-15.600 32.100-32 .05-7.550-2.610-15.270-8.610-21.710z"/></svg></div></div>
<div class="row alt" style="top:145.52px"><span class="id">4063</span><span class="nm">Abbi SANKEY</span><span class="em">abbisankey@hotmail.com</span><span class="dob">15/05/1984</span><span class="ad">12 Leicester Road, LE67 6HH, Ibstock</span><div class="co">United Kingdom</div><div class="gr">tuv3 UK- IRE</div><div class="lg"><svg class="fl" viewBox="0 0 20 20" width="11.7" height="11.7" style="left:0.2px;top:0.1px"><defs><clipPath id="fc4"><circle cx="10" cy="10" r="10"/></clipPath></defs><g clip-path="url(#fc4)"><rect width="20" height="20" fill="#2a4cb4"/><path d="M0 0L20 20M20 0L0 20" stroke="#fff" stroke-width="2.8"/><path d="M0 0L20 20M20 0L0 20" stroke="#e23a2e" stroke-width="0.9"/><path d="M10 0V20M0 10H20" stroke="#fff" stroke-width="5.2"/><path d="M10 0V20M0 10H20" stroke="#e23a2e" stroke-width="2.8"/></g></svg><svg viewBox="0 0 512 512" width="12.40" height="12.40" style="left:15.3px;top:-0.6px;fill:#cf2e88"><path d="M256 32C114.600 32 0 125.100 0 240c0 49.600 21.400 95 57 130.700C44.500 421.100 2.700 466 2.200 466.500c-2.200 2.300-2.800 5.700-1.500 8.700S4.800 480 8 480c66.300 0 116-31.800 140.600-51.400 32.700 12.300 69 19.400 107.400 19.400 141.400 0 256-93.100 256-208S397.400 32 256 32z"/></svg></div><div class="ab" style="left:771.10px"><svg viewBox="0 0 512 512" width="10.70" height="10.70" style=""><path d="M497.900 142.100l-46.100 46.100c-4.700 4.700-12.300 4.700-17 0l-111-111c-4.700-4.700-4.700-12.300 0-17l46.100-46.100c18.700-18.700 49.100-18.700 67.900 0l60.100 60.100c18.800 18.700 18.800 49.100 0 67.900zM284.200 99.800L21.600 362.400.4 483.900c-2.900 16.400 11.400 30.600 27.800 27.800l121.500-21.300 262.600-262.600c4.700-4.700 4.700-12.300 0-17l-111-111c-4.800-4.700-12.400-4.700-17.100 0zM124.100 339.900c-5.500-5.500-5.500-14.300 0-19.800l154-154c5.500-5.500 14.300-5.500 19.800 0s5.500 14.300 0 19.800l-154 154c-5.500 5.500-14.300 5.500-19.800 0zM88 424h48v36.300l-64.500 11.300-31.100-31.100L51.700 376H88v48z"/></svg></div><div class="ab" style="left:794.55px"><svg viewBox="0 0 512 512" width="10.70" height="10.70" style=""><path d="M502.300 190.800c3.900-3.100 9.700-.2 9.700 4.700V400c0 26.500-21.500 48-48 48H48c-26.500 0-48-21.500-48-48V195.600c0-5 5.700-7.800 9.700-4.700 22.400 17.400 52.100 39.500 154.100 113.600 21.100 15.400 56.700 47.800 92.200 47.600 35.700.3 72-32.800 92.300-47.600 102-74.100 131.600-96.300 154-113.700zM256 320c23.200.4 56.600-29.200 73.400-41.400 132.700-96.300 142.800-104.700 173.400-128.700 5.800-4.500 9.200-11.500 9.200-18.900v-19c0-26.500-21.500-48-48-48H48C21.500 64 0 85.500 0 112v19c0 7.400 3.400 14.300 9.200 18.900 30.600 23.900 40.700 32.400 173.400 128.700 16.800 12.200 50.200 41.800 73.400 41.400z"/></svg></div><div class="ab" style="left:818.00px"><svg viewBox="0 0 448 512" width="9.36" height="10.70" style=""><path d="M224 512c35.320 0 63.970-28.650 63.970-64H160.030c0 35.350 28.650 64 63.970 64zm215.390-149.710c-19.320-20.760-55.470-51.990-55.470-154.290 0-77.700-54.480-139.900-127.940-155.160V32c0-17.670-14.320-32-31.980-32s-31.980 14.330-31.980 32v20.840C118.560 68.100 64.080 130.300 64.080 208c0 102.300-36.150 133.530-55.470 154.290-6 6.450-8.660 14.160-8.610 21.710.11 16.400 12.980 32 32.100 32h383.800c19.120 0 32-15.600 32.100-32 .05-7.550-2.610-15.270-8.610-21.710z"/></svg></div></div>
<div class="row" style="top:185.36px"><span class="id">3579</span><span class="nm">Abbie COULTER</span><span class="em">abbiecoulter@yahoo.co.uk</span><span class="dob">16/07/1987</span><span class="ad">2 Beeston Hurst Sowerby, HX6 4LP, Bridge West</span><div class="co">United Kingdom</div><div class="gr">tuv3 UK- IRE</div><div class="lg"><svg class="fl" viewBox="0 0 20 20" width="11.7" height="11.7" style="left:0.2px;top:0.1px"><defs><clipPath id="fc5"><circle cx="10" cy="10" r="10"/></clipPath></defs><g clip-path="url(#fc5)"><rect width="20" height="20" fill="#2a4cb4"/><path d="M0 0L20 20M20 0L0 20" stroke="#fff" stroke-width="2.8"/><path d="M0 0L20 20M20 0L0 20" stroke="#e23a2e" stroke-width="0.9"/><path d="M10 0V20M0 10H20" stroke="#fff" stroke-width="5.2"/><path d="M10 0V20M0 10H20" stroke="#e23a2e" stroke-width="2.8"/></g></svg><svg viewBox="0 0 512 512" width="12.40" height="12.40" style="left:15.3px;top:-0.6px;fill:#cf2e88"><path d="M256 32C114.600 32 0 125.100 0 240c0 49.600 21.400 95 57 130.700C44.500 421.100 2.700 466 2.200 466.500c-2.200 2.300-2.800 5.700-1.500 8.700S4.800 480 8 480c66.300 0 116-31.800 140.600-51.400 32.700 12.300 69 19.400 107.400 19.400 141.400 0 256-93.100 256-208S397.400 32 256 32z"/></svg></div><div class="ab" style="left:771.10px"><svg viewBox="0 0 512 512" width="10.70" height="10.70" style=""><path d="M497.900 142.100l-46.100 46.100c-4.700 4.700-12.300 4.700-17 0l-111-111c-4.700-4.700-4.700-12.300 0-17l46.100-46.100c18.700-18.700 49.100-18.700 67.900 0l60.100 60.100c18.800 18.700 18.800 49.100 0 67.900zM284.200 99.800L21.600 362.400.4 483.900c-2.900 16.400 11.400 30.600 27.800 27.800l121.500-21.300 262.600-262.600c4.700-4.700 4.700-12.300 0-17l-111-111c-4.800-4.700-12.400-4.700-17.100 0zM124.100 339.900c-5.500-5.500-5.500-14.300 0-19.800l154-154c5.500-5.500 14.300-5.500 19.800 0s5.500 14.300 0 19.800l-154 154c-5.500 5.500-14.300 5.500-19.800 0zM88 424h48v36.300l-64.500 11.300-31.100-31.100L51.700 376H88v48z"/></svg></div><div class="ab" style="left:794.55px"><svg viewBox="0 0 512 512" width="10.70" height="10.70" style=""><path d="M502.300 190.800c3.900-3.100 9.700-.2 9.700 4.700V400c0 26.500-21.500 48-48 48H48c-26.500 0-48-21.500-48-48V195.600c0-5 5.700-7.800 9.700-4.700 22.400 17.400 52.100 39.500 154.100 113.600 21.100 15.400 56.700 47.800 92.200 47.600 35.700.3 72-32.800 92.300-47.600 102-74.100 131.600-96.300 154-113.700zM256 320c23.200.4 56.600-29.200 73.400-41.400 132.700-96.300 142.800-104.700 173.400-128.700 5.800-4.500 9.200-11.500 9.200-18.900v-19c0-26.500-21.500-48-48-48H48C21.500 64 0 85.500 0 112v19c0 7.400 3.400 14.300 9.200 18.900 30.600 23.900 40.700 32.400 173.400 128.700 16.800 12.200 50.200 41.800 73.400 41.400z"/></svg></div><div class="ab" style="left:818.00px"><svg viewBox="0 0 448 512" width="9.36" height="10.70" style=""><path d="M224 512c35.320 0 63.970-28.650 63.970-64H160.030c0 35.350 28.650 64 63.970 64zm215.390-149.710c-19.320-20.760-55.470-51.990-55.470-154.290 0-77.700-54.480-139.900-127.940-155.160V32c0-17.670-14.320-32-31.980-32s-31.980 14.330-31.980 32v20.840C118.560 68.100 64.080 130.300 64.080 208c0 102.300-36.150 133.530-55.470 154.290-6 6.450-8.660 14.160-8.610 21.710.11 16.400 12.980 32 32.100 32h383.800c19.120 0 32-15.600 32.100-32 .05-7.550-2.610-15.270-8.610-21.710z"/></svg></div></div>
<div class="row" style="top:225.20px"><span class="id">746</span><span class="nm">Abbie Webb</span><span class="em">Abbie.webb@hotmail.co.uk</span><span class="dob">07/12/1988</span><span class="ad">13 Kencot Walk, BS13 9DU, Bristol</span><div class="co">United Kingdom</div><div class="gr">tuv2 UK- IRE</div><div class="lg"><svg class="fl" viewBox="0 0 20 20" width="11.7" height="11.7" style="left:0.2px;top:0.1px"><defs><clipPath id="fc6"><circle cx="10" cy="10" r="10"/></clipPath></defs><g clip-path="url(#fc6)"><rect width="20" height="20" fill="#2a4cb4"/><path d="M0 0L20 20M20 0L0 20" stroke="#fff" stroke-width="2.8"/><path d="M0 0L20 20M20 0L0 20" stroke="#e23a2e" stroke-width="0.9"/><path d="M10 0V20M0 10H20" stroke="#fff" stroke-width="5.2"/><path d="M10 0V20M0 10H20" stroke="#e23a2e" stroke-width="2.8"/></g></svg><svg viewBox="0 0 512 512" width="12.40" height="12.40" style="left:15.3px;top:-0.6px;fill:#cf2e88"><path d="M256 32C114.600 32 0 125.100 0 240c0 49.600 21.400 95 57 130.700C44.500 421.100 2.700 466 2.200 466.500c-2.200 2.300-2.800 5.700-1.500 8.700S4.800 480 8 480c66.300 0 116-31.800 140.600-51.400 32.700 12.300 69 19.400 107.400 19.400 141.400 0 256-93.100 256-208S397.400 32 256 32z"/></svg><svg viewBox="0 0 512 512" width="12.30" height="12.30" style="left:30.8px;top:-0.6px;fill:#cf2e88"><path d="M512 0C460.220 3.560 96.440 38.200 71.010 287.610c-3.090 26.660-4.840 53.440-5.990 80.240l178.870-178.690c6.250-6.250 16.400-6.250 22.650 0s6.250 16.380 0 22.630L7.040 471.030c-9.380 9.370-9.380 24.570 0 33.940 9.380 9.370 24.590 9.370 33.980 0l57.130-57.070c42.090-.14 84.150-2.530 125.960-7.360 53.480-5.440 97.020-26.470 132.580-56.540H255.740l146.790-48.880c11.250-14.890 21.370-30.710 30.450-47.120h-81.140l106.540-53.210C500.290 132.860 510.190 26.260 512 0z"/></svg></div><div class="ab" style="left:771.10px"><svg viewBox="0 0 512 512" width="10.70" height="10.70" style=""><path d="M497.900 142.100l-46.100 46.100c-4.700 4.700-12.300 4.700-17 0l-111-111c-4.700-4.700-4.700-12.300 0-17l46.100-46.100c18.700-18.700 49.100-18.700 67.900 0l60.100 60.100c18.800 18.700 18.800 49.100 0 67.900zM284.200 99.800L21.600 362.400.4 483.900c-2.900 16.400 11.400 30.600 27.800 27.800l121.500-21.300 262.600-262.600c4.700-4.700 4.700-12.300 0-17l-111-111c-4.800-4.700-12.400-4.700-17.100 0zM124.100 339.900c-5.500-5.500-5.500-14.300 0-19.800l154-154c5.500-5.500 14.300-5.500 19.800 0s5.500 14.300 0 19.800l-154 154c-5.500 5.500-14.300 5.500-19.800 0zM88 424h48v36.300l-64.500 11.300-31.100-31.100L51.700 376H88v48z"/></svg></div><div class="ab" style="left:794.55px"><svg viewBox="0 0 512 512" width="10.70" height="10.70" style=""><path d="M502.300 190.800c3.900-3.100 9.700-.2 9.700 4.700V400c0 26.500-21.500 48-48 48H48c-26.500 0-48-21.500-48-48V195.600c0-5 5.700-7.800 9.700-4.700 22.400 17.400 52.100 39.500 154.100 113.600 21.100 15.400 56.700 47.800 92.200 47.600 35.700.3 72-32.800 92.300-47.600 102-74.100 131.600-96.300 154-113.700zM256 320c23.200.4 56.600-29.200 73.400-41.400 132.700-96.300 142.800-104.700 173.400-128.700 5.800-4.500 9.200-11.500 9.200-18.900v-19c0-26.500-21.500-48-48-48H48C21.500 64 0 85.500 0 112v19c0 7.400 3.400 14.300 9.200 18.900 30.600 23.900 40.700 32.400 173.400 128.700 16.800 12.200 50.200 41.800 73.400 41.400z"/></svg></div><div class="ab" style="left:818.00px"><svg viewBox="0 0 448 512" width="9.36" height="10.70" style=""><path d="M224 512c35.320 0 63.970-28.650 63.970-64H160.030c0 35.350 28.650 64 63.970 64zm215.390-149.710c-19.320-20.760-55.470-51.990-55.470-154.290 0-77.700-54.480-139.900-127.940-155.160V32c0-17.670-14.320-32-31.980-32s-31.980 14.330-31.980 32v20.840C118.560 68.100 64.080 130.300 64.080 208c0 102.300-36.150 133.530-55.470 154.290-6 6.450-8.660 14.160-8.610 21.710.11 16.400 12.980 32 32.100 32h383.800c19.120 0 32-15.600 32.100-32 .05-7.550-2.610-15.270-8.610-21.710z"/></svg></div></div>
<div class="row" style="top:265.04px"><span class="id">10097</span><span class="nm">Abbie WHETTINGSTEEL</span><span class="em">awhettingsteel@aol.co.uk</span><span class="dob">23/03/1978</span><span class="ad">3 Islander Walk, S050 5TX, Eastleigh</span><div class="co">United Kingdom</div><div class="gr">tuv3 UK- IRE</div><div class="lg"><svg class="fl" viewBox="0 0 20 20" width="11.7" height="11.7" style="left:0.2px;top:0.1px"><defs><clipPath id="fc7"><circle cx="10" cy="10" r="10"/></clipPath></defs><g clip-path="url(#fc7)"><rect width="20" height="20" fill="#2a4cb4"/><path d="M0 0L20 20M20 0L0 20" stroke="#fff" stroke-width="2.8"/><path d="M0 0L20 20M20 0L0 20" stroke="#e23a2e" stroke-width="0.9"/><path d="M10 0V20M0 10H20" stroke="#fff" stroke-width="5.2"/><path d="M10 0V20M0 10H20" stroke="#e23a2e" stroke-width="2.8"/></g></svg><svg viewBox="0 0 512 512" width="12.30" height="12.30" style="left:15.3px;top:-0.6px;fill:#cf2e88"><path d="M512 0C460.220 3.560 96.440 38.200 71.010 287.610c-3.090 26.660-4.840 53.440-5.990 80.240l178.870-178.690c6.250-6.250 16.400-6.250 22.650 0s6.250 16.380 0 22.630L7.040 471.030c-9.380 9.370-9.380 24.570 0 33.940 9.380 9.370 24.590 9.370 33.980 0l57.130-57.070c42.090-.14 84.150-2.530 125.960-7.360 53.480-5.440 97.020-26.470 132.580-56.540H255.740l146.790-48.880c11.250-14.890 21.370-30.710 30.450-47.120h-81.140l106.540-53.210C500.290 132.860 510.190 26.260 512 0z"/></svg></div><div class="ab" style="left:771.10px"><svg viewBox="0 0 512 512" width="10.70" height="10.70" style=""><path d="M497.900 142.100l-46.100 46.100c-4.700 4.700-12.300 4.700-17 0l-111-111c-4.700-4.700-4.700-12.300 0-17l46.100-46.100c18.700-18.700 49.100-18.700 67.900 0l60.100 60.100c18.800 18.700 18.800 49.100 0 67.900zM284.200 99.800L21.600 362.400.4 483.900c-2.900 16.400 11.400 30.600 27.800 27.800l121.500-21.300 262.600-262.600c4.700-4.700 4.700-12.300 0-17l-111-111c-4.800-4.700-12.400-4.700-17.100 0zM124.100 339.900c-5.500-5.500-5.500-14.300 0-19.800l154-154c5.500-5.500 14.300-5.500 19.800 0s5.500 14.300 0 19.800l-154 154c-5.500 5.500-14.300 5.500-19.800 0zM88 424h48v36.300l-64.500 11.300-31.100-31.100L51.700 376H88v48z"/></svg></div><div class="ab" style="left:794.55px"><svg viewBox="0 0 512 512" width="10.70" height="10.70" style=""><path d="M502.300 190.800c3.900-3.100 9.700-.2 9.700 4.700V400c0 26.500-21.500 48-48 48H48c-26.500 0-48-21.500-48-48V195.600c0-5 5.700-7.800 9.700-4.700 22.400 17.400 52.100 39.500 154.100 113.600 21.100 15.400 56.700 47.800 92.200 47.600 35.700.3 72-32.800 92.300-47.600 102-74.100 131.600-96.300 154-113.700zM256 320c23.200.4 56.600-29.200 73.400-41.400 132.700-96.300 142.800-104.700 173.400-128.700 5.800-4.500 9.200-11.500 9.200-18.900v-19c0-26.500-21.500-48-48-48H48C21.500 64 0 85.500 0 112v19c0 7.400 3.400 14.300 9.200 18.900 30.600 23.900 40.700 32.400 173.400 128.700 16.800 12.200 50.200 41.800 73.400 41.400z"/></svg></div><div class="ab" style="left:818.00px"><svg viewBox="0 0 448 512" width="9.36" height="10.70" style=""><path d="M224 512c35.320 0 63.970-28.650 63.970-64H160.030c0 35.350 28.650 64 63.970 64zm215.390-149.710c-19.320-20.760-55.470-51.990-55.470-154.290 0-77.700-54.480-139.900-127.940-155.160V32c0-17.670-14.320-32-31.980-32s-31.980 14.330-31.980 32v20.840C118.560 68.100 64.080 130.300 64.080 208c0 102.300-36.150 133.530-55.470 154.290-6 6.450-8.660 14.160-8.610 21.710.11 16.400 12.980 32 32.100 32h383.800c19.120 0 32-15.600 32.100-32 .05-7.550-2.610-15.270-8.610-21.710z"/></svg></div></div>
<div class="row" style="top:304.88px"><span class="id">1717</span><span class="nm">Abby ESSIEN</span><span class="em">abby.e@me.com</span><span class="dob">08/05/1979</span><span class="ad">159 Preston New Road, FY3 9NJ, Blackpool</span><div class="co">United Kingdom</div><div class="gr">tuv3 UK- IRE</div><div class="lg"><svg class="fl" viewBox="0 0 20 20" width="11.7" height="11.7" style="left:0.2px;top:0.1px"><defs><clipPath id="fc8"><circle cx="10" cy="10" r="10"/></clipPath></defs><g clip-path="url(#fc8)"><rect width="20" height="20" fill="#2a4cb4"/><path d="M0 0L20 20M20 0L0 20" stroke="#fff" stroke-width="2.8"/><path d="M0 0L20 20M20 0L0 20" stroke="#e23a2e" stroke-width="0.9"/><path d="M10 0V20M0 10H20" stroke="#fff" stroke-width="5.2"/><path d="M10 0V20M0 10H20" stroke="#e23a2e" stroke-width="2.8"/></g></svg></div><div class="ab" style="left:771.10px"><svg viewBox="0 0 512 512" width="10.70" height="10.70" style=""><path d="M497.900 142.100l-46.100 46.100c-4.700 4.700-12.300 4.700-17 0l-111-111c-4.700-4.700-4.700-12.300 0-17l46.100-46.100c18.700-18.700 49.100-18.700 67.900 0l60.100 60.100c18.800 18.700 18.800 49.100 0 67.900zM284.200 99.800L21.600 362.400.4 483.900c-2.900 16.400 11.400 30.600 27.800 27.800l121.500-21.300 262.600-262.600c4.700-4.700 4.700-12.300 0-17l-111-111c-4.800-4.700-12.400-4.700-17.100 0zM124.100 339.900c-5.500-5.500-5.500-14.300 0-19.800l154-154c5.500-5.500 14.300-5.500 19.800 0s5.500 14.300 0 19.800l-154 154c-5.500 5.500-14.300 5.500-19.800 0zM88 424h48v36.300l-64.500 11.300-31.100-31.100L51.700 376H88v48z"/></svg></div><div class="ab" style="left:794.55px"><svg viewBox="0 0 512 512" width="10.70" height="10.70" style=""><path d="M502.300 190.800c3.900-3.100 9.700-.2 9.700 4.700V400c0 26.500-21.500 48-48 48H48c-26.500 0-48-21.500-48-48V195.600c0-5 5.700-7.800 9.700-4.700 22.400 17.400 52.100 39.500 154.100 113.600 21.100 15.400 56.700 47.800 92.200 47.600 35.700.3 72-32.800 92.300-47.600 102-74.100 131.600-96.300 154-113.700zM256 320c23.200.4 56.600-29.200 73.400-41.400 132.700-96.300 142.800-104.700 173.400-128.700 5.800-4.500 9.200-11.500 9.200-18.900v-19c0-26.500-21.500-48-48-48H48C21.500 64 0 85.500 0 112v19c0 7.400 3.400 14.300 9.200 18.900 30.600 23.900 40.700 32.400 173.400 128.700 16.800 12.200 50.200 41.800 73.400 41.400z"/></svg></div><div class="ab" style="left:818.00px"><svg viewBox="0 0 448 512" width="9.36" height="10.70" style=""><path d="M224 512c35.320 0 63.970-28.650 63.970-64H160.030c0 35.350 28.650 64 63.970 64zm215.390-149.710c-19.320-20.760-55.470-51.990-55.470-154.290 0-77.700-54.480-139.900-127.940-155.160V32c0-17.670-14.320-32-31.980-32s-31.980 14.330-31.980 32v20.840C118.560 68.100 64.080 130.300 64.080 208c0 102.300-36.150 133.530-55.470 154.290-6 6.450-8.660 14.160-8.610 21.710.11 16.400 12.980 32 32.100 32h383.800c19.120 0 32-15.600 32.100-32 .05-7.550-2.610-15.270-8.610-21.710z"/></svg></div></div>
<div class="row" style="top:344.72px"><span class="id">3165</span><span class="nm">Abby-Lee WESTWELL</span><span class="em">abbywestwell@googlemail.com</span><span class="dob">23/07/1977</span><span class="ad">15 Hawthorn Crescent, BL8 3NG, Bury Lancashire</span><div class="co">United Kingdom</div><div class="gr">tuv3 UK- IRE</div><div class="lg"><svg class="fl" viewBox="0 0 20 20" width="11.7" height="11.7" style="left:0.2px;top:0.1px"><defs><clipPath id="fc9"><circle cx="10" cy="10" r="10"/></clipPath></defs><g clip-path="url(#fc9)"><rect width="20" height="20" fill="#2a4cb4"/><path d="M0 0L20 20M20 0L0 20" stroke="#fff" stroke-width="2.8"/><path d="M0 0L20 20M20 0L0 20" stroke="#e23a2e" stroke-width="0.9"/><path d="M10 0V20M0 10H20" stroke="#fff" stroke-width="5.2"/><path d="M10 0V20M0 10H20" stroke="#e23a2e" stroke-width="2.8"/></g></svg><svg viewBox="0 0 512 512" width="12.30" height="12.30" style="left:15.3px;top:-0.6px;fill:#cf2e88"><path d="M512 0C460.220 3.560 96.440 38.200 71.010 287.610c-3.090 26.660-4.840 53.440-5.990 80.240l178.870-178.690c6.250-6.250 16.400-6.250 22.650 0s6.250 16.380 0 22.630L7.040 471.030c-9.380 9.370-9.380 24.570 0 33.940 9.380 9.370 24.590 9.370 33.980 0l57.130-57.070c42.090-.14 84.150-2.530 125.960-7.360 53.480-5.440 97.020-26.470 132.580-56.540H255.740l146.790-48.880c11.250-14.890 21.370-30.710 30.450-47.120h-81.140l106.540-53.210C500.290 132.860 510.190 26.260 512 0z"/></svg></div><div class="ab" style="left:771.10px"><svg viewBox="0 0 512 512" width="10.70" height="10.70" style=""><path d="M497.900 142.100l-46.100 46.100c-4.700 4.700-12.300 4.700-17 0l-111-111c-4.700-4.700-4.700-12.300 0-17l46.100-46.100c18.700-18.700 49.100-18.700 67.900 0l60.100 60.100c18.800 18.700 18.800 49.100 0 67.900zM284.200 99.800L21.600 362.400.4 483.900c-2.900 16.400 11.400 30.600 27.800 27.800l121.500-21.300 262.600-262.600c4.700-4.700 4.700-12.300 0-17l-111-111c-4.800-4.700-12.400-4.700-17.100 0zM124.100 339.900c-5.500-5.500-5.500-14.300 0-19.800l154-154c5.500-5.500 14.300-5.500 19.800 0s5.500 14.300 0 19.800l-154 154c-5.500 5.500-14.300 5.500-19.800 0zM88 424h48v36.300l-64.500 11.300-31.100-31.100L51.700 376H88v48z"/></svg></div><div class="ab" style="left:794.55px"><svg viewBox="0 0 512 512" width="10.70" height="10.70" style=""><path d="M502.300 190.800c3.900-3.100 9.700-.2 9.700 4.700V400c0 26.500-21.500 48-48 48H48c-26.500 0-48-21.500-48-48V195.600c0-5 5.700-7.800 9.700-4.700 22.400 17.400 52.100 39.500 154.100 113.600 21.100 15.400 56.700 47.800 92.200 47.600 35.700.3 72-32.800 92.300-47.600 102-74.100 131.600-96.300 154-113.700zM256 320c23.200.4 56.600-29.200 73.400-41.400 132.700-96.300 142.800-104.700 173.400-128.700 5.800-4.500 9.200-11.500 9.200-18.900v-19c0-26.500-21.500-48-48-48H48C21.500 64 0 85.500 0 112v19c0 7.400 3.400 14.300 9.200 18.900 30.600 23.900 40.700 32.400 173.400 128.700 16.800 12.200 50.200 41.800 73.400 41.400z"/></svg></div><div class="ab" style="left:818.00px"><svg viewBox="0 0 448 512" width="9.36" height="10.70" style=""><path d="M224 512c35.320 0 63.970-28.650 63.970-64H160.030c0 35.350 28.650 64 63.970 64zm215.390-149.710c-19.320-20.760-55.470-51.990-55.470-154.290 0-77.700-54.480-139.900-127.940-155.160V32c0-17.670-14.320-32-31.980-32s-31.980 14.330-31.980 32v20.840C118.560 68.100 64.080 130.300 64.080 208c0 102.300-36.150 133.530-55.470 154.290-6 6.450-8.660 14.160-8.610 21.710.11 16.400 12.980 32 32.100 32h383.800c19.120 0 32-15.600 32.100-32 .05-7.550-2.610-15.270-8.610-21.710z"/></svg></div></div>
<div id="bfoot" class="abs"><div class="pg dis" style="left:7.20px;width:31.80px">First</div><div class="pg dis" style="left:38.00px;width:47.00px">Previous</div><div class="pg on" style="left:84.00px;width:27.60px">1</div><div class="pg " style="left:110.60px;width:24.55px">2</div><div class="pg " style="left:134.15px;width:24.20px">3</div><div class="pg " style="left:157.35px;width:24.75px">4</div><div class="pg " style="left:181.10px;width:24.40px">5</div><div class="pg " style="left:204.50px;width:32.40px">Next</div><div class="pg " style="left:235.90px;width:31.30px">Last</div><div id="ipp" class="abs">Items per Page</div><div class="pg " style="left:713.70px;width:25.20px">10</div><div class="pg " style="left:737.90px;width:24.20px">15</div><div class="pg " style="left:761.10px;width:24.90px">25</div><div class="pg on" style="left:785.00px;width:26.30px">50</div><div class="pg " style="left:810.30px;width:29.20px">100</div></div>
</div>

<div id="foot" class="abs"><div class="l"><b>Copyright © 2017 - 2018 <span style="color:#1f6fb5">PIPA</span>.</b> All rights reserved.</div><div class="r"><b>PIPA</b> Admin Panel | Version 1.0</div></div>
<div id="botline" class="abs"></div>
</body>
</html>
